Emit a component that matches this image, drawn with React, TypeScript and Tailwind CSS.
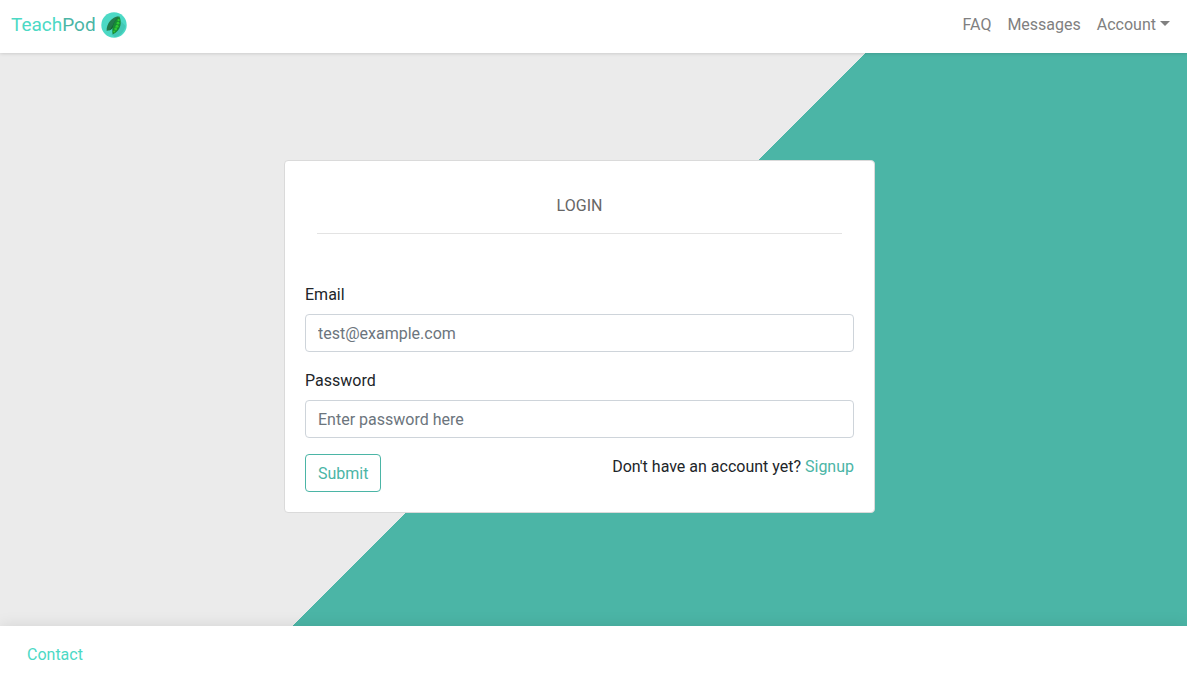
import React from "react";

function PodLogo() {
  return (
    <svg viewBox="0 0 26 26" className="size-[26px]" aria-hidden="true">
      <circle cx="13" cy="13" r="12.7" fill="#4cd9c5" />
      <path d="M13 21 L20.5 9.5 L24.5 14 C23 20 19 24 14 25.2 L10 22Z" fill="#42c8b6" />
      <path d="M17.5 4.3 C11 4.8 5.5 11.5 5.6 18.8 C10 19 13.5 14.5 14.8 9.5Z" fill="#237a4b" />
      <path d="M17.6 4.2 C13 8.5 12.2 14 8 18.7 C13 16.5 16.5 11 17.6 4.2Z" fill="#176638" />
      <path d="M18.3 4.2 C21.2 10 20.2 18.5 11.7 22.4 C10.3 17 12.2 9.3 18.3 4.2Z" fill="#168a35" />
      <g fill="#2fc832">
        <circle cx="17.6" cy="8.2" r="1.1" />
        <circle cx="17" cy="11.2" r="1.4" />
        <circle cx="16" cy="14.2" r="1.5" />
        <circle cx="14.7" cy="17" r="1.4" />
        <circle cx="13.2" cy="19.5" r="1" />
      </g>
    </svg>
  );
}

function Field({ id, label, type, placeholder }: { id: string; label: string; type: string; placeholder: string }) {
  return (
    <div className="mb-4">
      <label htmlFor={id} className="mb-1.5 block">
        {label}
      </label>
      <input
        id={id}
        type={type}
        placeholder={placeholder}
        className="block h-[38px] w-full rounded border border-[#ced4da] bg-white px-3 placeholder:text-[#6c757d] placeholder:opacity-100"
      />
    </div>
  );
}

export default function App() {
  return (
    <div className="flex min-h-screen flex-col bg-white font-['Roboto',sans-serif] text-base leading-[26px] text-[#212529]">
      <header className="relative z-10 flex items-center justify-between bg-white pt-2 pr-[17px] pb-[5px] pl-[11px] shadow-[0_0_4px_rgba(0,0,0,0.2)]">
        <a href="#home" className="flex h-10 items-center gap-[5px] pb-1.5 text-[19px]">
          <span className="text-[#4cd9c5]">
            Teach<span className="text-[#4bb5a6]">Pod</span>
          </span>
          <PodLogo />
        </a>
        <nav className="flex gap-4 pb-1.5 text-[#808080]">
          <a href="#faq">FAQ</a>
          <a href="#messages">Messages</a>
          <button type="button" aria-haspopup="menu" className="flex items-center gap-1">
            Account
            <svg viewBox="0 0 10 5" className="mb-1 h-[5px] w-2.5" fill="currentColor" aria-hidden="true">
              <path d="M0 0H10L5 5Z" />
            </svg>
          </button>
        </nav>
      </header>

      <main className="flex grow items-center justify-center bg-[linear-gradient(135deg,#ebebeb_calc(50%-10px),#4bb5a6_calc(50%-10px))] pr-7 pb-1.5">
        <section className="w-full max-w-[591px] rounded border border-[#dadada] bg-white p-5">
          <h1 className="mx-3 border-b border-[#e3e3e3] pt-3 pb-3.5 text-center text-[#666666]">LOGIN</h1>
          <form className="pt-12" onSubmit={(e) => e.preventDefault()}>
            <Field id="email" label="Email" type="email" placeholder="test@example.com" />
            <Field id="password" label="Password" type="password" placeholder="Enter password here" />
            <div className="flex items-start justify-between">
              <button type="submit" className="h-[38px] rounded border border-[#4bb5a6] px-3 pt-0.5 text-[#4bb5a6]">
                Submit
              </button>
              <p>
                Don't have an account yet?{" "}
                <a href="#signup" className="text-[#4bb5a6]">
                  Signup
                </a>
              </p>
            </div>
          </form>
        </section>
      </main>

      <footer className="relative bg-white px-[27px] pt-4 pb-[11px] shadow-[0_0_15px_rgba(0,0,0,0.1)]">
        <a href="#contact" className="text-[#4cd9c5]">
          Contact
        </a>
      </footer>
    </div>
  );
}
